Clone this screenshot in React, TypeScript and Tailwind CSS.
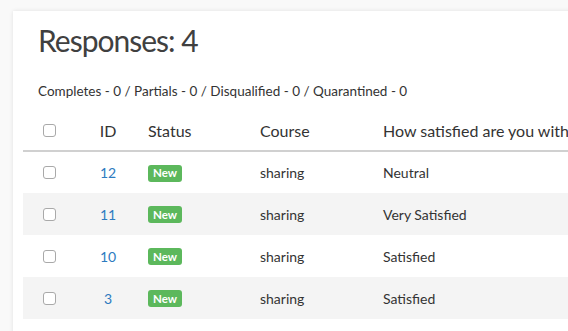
import React from "react";

const rows = [
  { id: "12", course: "sharing", answer: "Neutral" },
  { id: "11", course: "sharing", answer: "Very Satisfied" },
  { id: "10", course: "sharing", answer: "Satisfied" },
  { id: "3", course: "sharing", answer: "Satisfied" },
];

function Box() {
  return <div className="w-[13px] h-[13px] rounded-[3px] border border-[#a9a9a9] bg-white" />;
}

export default function App() {
  return (
    <div
      className="w-[568px] h-[331px] overflow-hidden bg-[#f9f9f9] pl-[13px] pt-[11px]"
      style={{ fontFamily: "Lato, 'Open Sans', sans-serif" }}
    >
      <div className="w-[620px] h-[340px] bg-white shadow-[0_0_4px_rgba(0,0,0,0.1)] pt-[11px] pl-[10px]">
        <h1 className="pl-[15px] text-[30px] leading-[36px] text-[#404040] tracking-[-1px]">Responses: 4</h1>
        <p className="pl-[15px] mt-[25px] text-[13.5px] leading-[16px] text-[#333]">
          Completes - 0 / Partials - 0 / Disqualified - 0 / Quarantined - 0
        </p>
        <table className="mt-[12px] table-fixed border-collapse w-[620px] text-[#333]">
          <colgroup>
            <col className="w-[53px]" />
            <col className="w-[64px]" />
            <col className="w-[112px]" />
            <col className="w-[123px]" />
            <col />
          </colgroup>
          <thead>
            <tr className="h-[40px] border-b-2 border-[#d0d0d0] text-[16px] leading-[19px]">
              <th className="pl-[20px] text-left font-normal align-middle"><Box /></th>
              <th className="text-center font-normal">ID</th>
              <th className="pl-[8px] text-left font-normal">Status</th>
              <th className="pl-[8px] text-left font-normal">Course</th>
              <th className="pl-[8px] text-left font-normal whitespace-nowrap">How satisfied are you with</th>
            </tr>
          </thead>
          <tbody>
            {rows.map((r, i) => (
              <tr key={r.id} className={`h-[42px] text-[14px] leading-[17px] ${i % 2 === 1 ? "bg-[#f4f4f4]" : "bg-white"}`}>
                <td className="pl-[20px] align-middle"><Box /></td>
                <td className="text-center text-[#2d7bc0]">{r.id}</td>
                <td className="pl-[8px]">
                  <span className="inline-flex items-center justify-center w-[34px] h-[17px] rounded-[3px] bg-[#5cb85c] text-white text-[11.5px] font-bold leading-none">New</span>
                </td>
                <td className="pl-[8px]">{r.course}</td>
                <td className="pl-[8px] whitespace-nowrap">{r.answer}</td>
              </tr>
            ))}
          </tbody>
        </table>
      </div>
    </div>
  );
}
